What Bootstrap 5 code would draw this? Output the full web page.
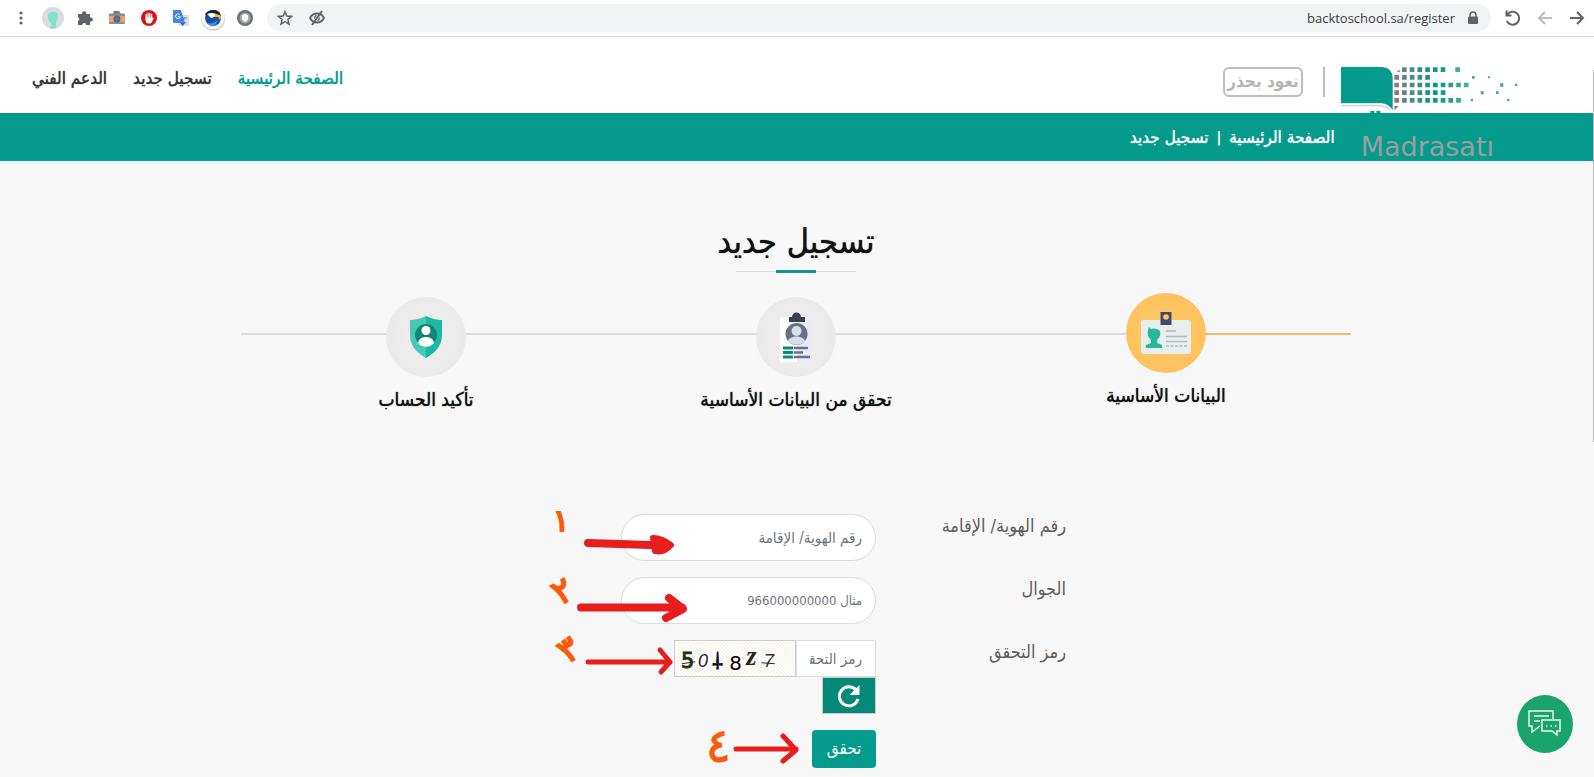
<!DOCTYPE html>
<html lang="ar" dir="rtl">
<head>
<meta charset="utf-8">
<meta name="viewport" content="width=device-width, initial-scale=1">
<title>تسجيل جديد</title>
<link href="https://cdn.jsdelivr.net/npm/bootstrap@5.3.0/dist/css/bootstrap.min.css" rel="stylesheet">
<style>
:root { --teal: #049b8c; --ink: #111; --grey: #dcdcdc; }
body { font-family: "DejaVu Sans Condensed", "DejaVu Sans", sans-serif; background: #f7f7f7; color: var(--ink); min-height: 100vh; }
.browser-bar { height: 37px; border-bottom: 1px solid #d5d7da; background: #fff; padding-left: 5px; padding-right: 1px; color: #5f6368; }
.tool { width: 32px; height: 32px; padding: 0; border: 0; background: none; color: inherit; display: flex; align-items: center; justify-content: center; flex: none; }
.omnibox { height: 28px; background: #f1f3f4; border-radius: 14px; margin: 0 6px; padding-right: 2px; padding-left: 2px; }
.omnibox input { font: 13px/20px "Open Sans", sans-serif; color: #3c4043; background: none; border: 0; text-align: right; outline: 0; min-width: 0; padding: 0 2px; }
.site-head { height: 76px; background: #fff; padding: 0 72px 0 32px; }
.brand { margin-top: 30px; }
.campaign { width: 80px; height: 30px; border: 2px solid #bdbdbd; border-radius: 6px; color: #b5b5b5; font-size: 17px; line-height: 24px; font-weight: 700; text-align: center; white-space: nowrap; }
.rule { width: 2px; height: 30px; background: #bdbdbd; margin: 0 16px 0 20px; }
.menu { gap: 26px; margin-top: 29px; font-size: 17px; line-height: 24px; text-shadow: 0 0 1px currentColor; }
.menu a { color: #333; text-decoration: none; }
.menu a.active { color: var(--teal); }
.crumbs { height: 48px; background: var(--teal); color: #fff; padding-right: 100px; font-size: 17px; line-height: 24px; text-shadow: 0 0 1px currentColor; }
.crumbs a { color: #fff; text-decoration: none; }
.wordmark { font: 27px/30px "DejaVu Sans", sans-serif; color: #9a9f9e; margin: 19px 0 0 26px; text-shadow: none; }
.page-body { padding-right: 2px; }
.container-page { max-width: 1140px; --bs-gutter-x: 30px; }
.row-page { --bs-gutter-x: 30px; }
.title { font-size: 34px; line-height: 48px; font-weight: 500; margin: 0 0 5px; text-shadow: 0 0 1px currentColor; }
.title-rule { width: 120px; height: 3px; background: linear-gradient(90deg, transparent 40px, #159788 40px 80px, transparent 80px), linear-gradient(var(--grey), var(--grey)) center / 100% 1px no-repeat; margin-bottom: 20px; }
.steps { margin-bottom: 101px; }
.step { flex: 1 1 0; position: relative; padding-top: 4px; font-size: 19px; line-height: 28px; text-shadow: 0 0 1px currentColor; }
.step::before { content: ""; position: absolute; top: 40px; left: 0; right: 0; height: 2px; background: var(--grey); }
.step.current { padding-top: 0; }
.step.current::before { background: linear-gradient(90deg, var(--grey) 50%, #eebc60 50%); }
.disc { position: relative; width: 80px; height: 80px; border-radius: 50%; background: radial-gradient(#f0f0f0, #e8e8e8); margin-bottom: 8px; }
.current .disc { background: radial-gradient(#ffc96c, #fdbf58); }
.field { margin-bottom: 16px; position: relative; }
.field label { font-size: 18px; line-height: 24px; color: #5d5d5d; }
.field .form-control { font-size: 15px; color: #555; border-color: #dcdcdc; padding: 0 13px; }
.field .form-control::placeholder { color: #6c757d; }
.field #mobile { font-size: 13px; }
.pill { height: 47px; border-radius: 24px; }
.captcha .form-control { width: 80px; height: 37px; border-radius: 0; flex: none; }
.captcha svg { border: 1px solid #ccc; flex: none; }
.reload { width: 54px; height: 37px; background: #048877; border: 1px solid #ccc; border-radius: 0; padding: 0; }
.after-label { margin-inline-start: 33.3333%; }
.submit { width: 64px; height: 38px; background: var(--teal); color: #fff; border: 0; border-radius: 4px; font-size: 17px; padding: 0; }
.mark-up { position: absolute; left: 0; top: 0; overflow: visible; pointer-events: none; direction: ltr; font-family: "DejaVu Sans", sans-serif; }
.chat { width: 56px; height: 58px; border-radius: 50%; border: 0; padding: 0; background: #1aa36f; right: 21px; bottom: 24px; }
.thumb { width: 1px; height: 372px; top: 70px; right: 0; background: #bbb; }
</style>
</head>
<body>
<div class="browser-bar d-flex align-items-center">
  <button class="tool" aria-label="التالي"><svg width="18" height="18" viewBox="0 0 18 18" fill="none" stroke="currentColor" stroke-width="2"><path d="M2 9h13M9 3l6 6-6 6"/></svg></button>
  <button class="tool" aria-label="السابق"><svg width="18" height="18" viewBox="0 0 18 18" fill="none" stroke="#bbbdbf" stroke-width="2"><path d="M16 9H3M9 3L3 9l6 6"/></svg></button>
  <button class="tool" aria-label="تحديث"><svg width="18" height="18" viewBox="0 0 18 18" fill="none" stroke="currentColor" stroke-width="2"><path d="M3 6a6.500 6.500 0 1 1-.2 6M2.500 1.500v5h5"/></svg></button>
  <div class="omnibox d-flex align-items-center flex-grow-1" dir="ltr">
    <button class="tool" aria-label="المتعقبات"><svg width="18" height="18" viewBox="0 0 18 18" fill="none" stroke="currentColor" stroke-width="1.800"><path d="M2 9c3-6 11-6 14 0-3 6-11 6-14 0z"/><path d="M4 16L14 2" stroke-width="2"/><path d="M6 9c0-2 1-3 3-3L6.500 10zM12 9c0 2-1 3-3 3l2.500-4z" fill="currentColor" stroke="none"/></svg></button>
    <button class="tool order-first" aria-label="مفضلة"><svg width="16" height="16" viewBox="0 0 16 16" fill="none" stroke="currentColor" stroke-width="1.500"><path d="M8 1.800l1.800 4.300 4.700.4-3.600 3 1.100 4.600L8 11.700 4 14.100l1.100-4.600-3.600-3 4.700-.4z"/></svg></button>
    <input class="flex-grow-1" type="text" value="backtoschool.sa/register" aria-label="العنوان">
    <span class="tool"><svg width="12" height="14" viewBox="0 0 12 14"><path d="M3 6V4a3 3 0 0 1 6 0v2" fill="none" stroke="#5f6368" stroke-width="1.500"/><rect x="1" y="5.500" width="10" height="7.500" rx="1" fill="#5f6368"/></svg></span>
  </div>
  <button class="tool" aria-label="إضافة"><svg width="16" height="16" viewBox="0 0 16 16"><circle cx="8" cy="8" r="8" fill="#6b7079"/><circle cx="8" cy="8" r="5.500" fill="#a4a7ae"/><path d="M5 5l3-1 3 1v3c0 2-1 3-3 4-2-1-3-2-3-4z" fill="#fff"/></svg></button>
  <button class="tool" aria-label="إضافة"><svg width="26" height="26" viewBox="0 0 26 26"><circle cx="13" cy="13.500" r="12" fill="#c9c9c9"/><circle cx="13" cy="12.500" r="11.500" fill="#fff"/><circle cx="13" cy="13" r="8" fill="#174ea6"/><path d="M5 9C9 4 17 4 20 8l1 4-6-1-9-1z" fill="#17202c"/><path d="M7 9c4-2 8-1 11 1l-4 2-3 1z" fill="#fff"/><path d="M15 9l5 1q2 2 0 5l-2-3-4 0z" fill="#f5b82e"/><path d="M7 18c4 1 8 0 11-3-2 6-7 8-11 3z" fill="#3d94ec"/></svg></button>
  <button class="tool" aria-label="إضافة"><svg width="16" height="16" viewBox="0 0 16 16"><rect x="6" y="5" width="10" height="11" fill="#dcdfe2"/><path d="M8 8h6M11 7v1c0 3-1 4-3 5M9 9c1 2 2 3 4 4" stroke="#6b8095" stroke-width="1" fill="none"/><path d="M0 0h8l4 13H1a1 1 0 0 1-1-1z" fill="#4785ec"/><path d="M7.500 13H12l-2.500 3z" fill="#2a56c6"/><path d="M6.500 4.500a2.300 2.300 0 1 0 .7 2H5" stroke="#fff" fill="none"/></svg></button>
  <button class="tool" aria-label="إضافة"><svg width="16" height="16" viewBox="0 0 16 16"><circle cx="8" cy="8" r="8" fill="#d91218"/><path d="M5.200 9V4.500M7 8V3.300M8.800 8V3.300M10.600 9V4.500" stroke="#fff" stroke-width="1.300" stroke-linecap="round"/><path d="M4.500 7.500h6.700L12 8c.5-1 1-.5.800 0L11 12c-1 2-5 2-6 0-.5-1-.5-3-.5-4.500z" fill="#fff"/></svg></button>
  <button class="tool" aria-label="إضافة"><svg width="16" height="14" viewBox="0 0 16 14"><path d="M5 0h5l2 3H4z" fill="#777b80"/><rect y="2.500" width="16" height="10.500" rx="1" fill="#8b8d90"/><rect y="5" width="16" height="6" fill="#ed9f67"/><circle cx="8" cy="8" r="3.500" fill="#5d6674"/><circle cx="8" cy="8" r="1.800" fill="#4a83c9"/></svg></button>
  <button class="tool" aria-label="الإضافات"><svg width="16" height="16" viewBox="0 0 16 16"><path d="M1 4h4a2.200 2.200 0 1 1 4.200 0H13v3.500a2.200 2.200 0 1 1 0 4.200V15H9.200a2 2 0 0 0-4 0H1v-4a2 2 0 0 0 0-3.800z" fill="#5f6368"/></svg></button>
  <button class="tool" aria-label="الحساب"><svg width="22" height="22" viewBox="0 0 22 22"><circle cx="11" cy="11" r="11" fill="#dadce0"/><path d="M6 7c2-3 9-3 10 0 .5 4-1 6-2 8l.5 5.500-5 1.400-2-2 2-1-.500-3C6 14 5.500 10 6 7z" fill="#7ee3d0"/></svg></button>
  <button class="tool" aria-label="القائمة"><svg width="4" height="14" viewBox="0 0 4 14" fill="#5f6368"><circle cx="2" cy="2" r="1.600"/><circle cx="2" cy="7" r="1.600"/><circle cx="2" cy="12" r="1.600"/></svg></button>
</div>

<header class="site-head d-flex align-items-start justify-content-between">
  <a href="#" class="brand d-flex text-decoration-none" aria-label="مدرستي">
    <svg width="181" height="46" viewBox="0 0 543 138">
      <defs><linearGradient id="fade" gradientUnits="userSpaceOnUse" x1="160" y1="0" x2="390" y2="0"><stop offset="0" stop-color="#827f80"/><stop offset=".5" stop-color="#0c9788"/><stop offset=".7" stop-color="#179d8d"/><stop offset="1" stop-color="#55b5a4"/></linearGradient></defs>
      <path d="M0 0h124q31 2 31 34v96q-14-21-34-21H0z" fill="#049b8c"/>
      <path d="M0 113h118q20 0 34 16" fill="none" stroke="#fff" stroke-width="5"/>
      <path d="M3 116h116q18 1 30 14" fill="none" stroke="#9aa" stroke-width="2"/>
      <path d="M88 132h12v6H88zM106 132h12v6h-12z" fill="#049b8c"/>
      <path d="M168 15l8-8v8zM160 117h13l-12 13z" fill="#827f80"/>
      <g stroke="url(#fade)" stroke-width="14" fill="none" stroke-dasharray="14 9.200">
        <path d="M183 8.010L313 8"/><path d="M160 31.010L267 31"/><path d="M160 54.010L384 54"/><path d="M160 77.010L314 77"/><path d="M160 100.010L362 100"/>
      </g>
      <path d="M343 1h14v14h-14zM393 27h8v8h-8zM441 28h6v6h-6zM477 49h10v10h-10zM522 50h7v7h-7zM419 73h9v9h-9zM465 73h8v8h-8zM389 96h7v7h-7zM498 96h7v7h-7z" fill="#3fae9d"/>
    </svg>
    <span class="rule"></span>
    <span class="campaign">نعود بحذر</span>
  </a>
  <nav class="menu d-flex"><a class="active" href="#">الصفحة الرئيسية</a><a href="#">تسجيل جديد</a><a href="#">الدعم الفني</a></nav>
</header>

<div class="crumbs d-flex align-items-start">
  <span class="wordmark">Madrasatı</span>
  <nav class="d-flex gap-2 pt-2 mt-1"><a href="#">الصفحة الرئيسية</a><small>|</small><span>تسجيل جديد</span></nav>
</div>

<div class="page-body">
<main class="container container-page pt-5 mt-2">
  <div class="d-flex flex-column align-items-center">
    <h1 class="title">تسجيل جديد</h1>
    <div class="title-rule"></div>
  </div>
  <ol class="steps d-flex list-unstyled text-center pe-0">
    <li class="step current d-flex flex-column align-items-center">
      <span class="disc d-flex align-items-center justify-content-center"><svg width="50" height="42" viewBox="0 0 50 42"><rect y="8" width="50" height="34" rx="3" fill="#e8edee"/><path d="M19.500 0h11v13h-11z" fill="#434a66"/><circle cx="25" cy="5" r="2.800" fill="#ffc66a"/><path d="M8 15l2 2c3-1 7 0 9 2 1 5-1 7-3 9v3l5 2v3H5v-3l5-2v-3c-4-4-4-7-2-13z" fill="#25b899"/><path d="M25 19h10M25 24.500h21M25 29.500h21" stroke="#b0bbbc" stroke-width="1.700"/><path d="M25 34h21" stroke="#b0bbbc" stroke-width="1.700" stroke-dasharray="3 1.500"/></svg></span>
      <span>البيانات الأساسية</span>
    </li>
    <li class="step d-flex flex-column align-items-center">
      <span class="disc d-flex align-items-center justify-content-center"><svg width="33" height="50" viewBox="0 0 33 50"><path d="M0 6h17v44H0z" fill="#fff"/><path d="M17 6h15v44H17z" fill="#e9ebf5"/><path d="M9 5h3a4.500 4.500 0 0 1 9 0h4v5H9z" fill="#3b4047"/><circle cx="16.500" cy="22" r="11" fill="#6a7186"/><circle cx="16.500" cy="19" r="5" fill="#d9dde7"/><path d="M8 29c2-6 15-6 17 0-4 5-13 5-17 0z" fill="#d9dde7"/><path d="M3 36h10M3 40.500h10M3 45h10" stroke="#0d8a75" stroke-width="3"/><path d="M14 36h14M14 40.500h9M14 45h16" stroke="#6a7186" stroke-width="2.500"/></svg></span>
      <span>تحقق من البيانات الأساسية</span>
    </li>
    <li class="step d-flex flex-column align-items-center">
      <span class="disc d-flex align-items-center justify-content-center"><svg width="32" height="42" viewBox="0 0 32 42"><path d="M16 0Q8 4 0 4v15c0 11 7 18 16 23z" fill="#47c9b7"/><path d="M16 0q8 4 16 4v15c0 11-7 18-16 23z" fill="#19b9a4"/><circle cx="16" cy="19" r="11" fill="#0c8877"/><circle cx="16" cy="14.500" r="4.500" fill="#fff"/><path d="M8 27c1-8 15-8 16 0-4 5-12 5-16 0z" fill="#fff"/></svg></span>
      <span>تأكيد الحساب</span>
    </li>
  </ol>

  <div class="row row-page justify-content-center">
    <form class="col-lg-6">
      <div class="field">
        <div class="row row-page">
          <label class="col-4" for="idno">رقم الهوية/ الإقامة</label>
          <div class="col-6"><input id="idno" class="form-control pill" type="text" placeholder="رقم الهوية/ الإقامة"></div>
        </div>
        <svg class="mark-up" width="170" height="47" viewBox="526 514 170 47">
          <text x="553" y="531" font-size="30" fill="#fb5a0a" stroke="#fb5a0a" stroke-width="2">١</text>
          <path d="M588 543l62 2" stroke="#e81e1e" stroke-width="8" stroke-linecap="round"/><path d="M653 538q9 0 18 7-7 8-16 6z" fill="#e81e1e" stroke="#e81e1e" stroke-width="6" stroke-linejoin="round"/>
        </svg>
      </div>
      <div class="field">
        <div class="row row-page">
          <label class="col-4" for="mobile">الجوال</label>
          <div class="col-6"><input id="mobile" class="form-control pill" type="text" placeholder="مثال 966000000000"></div>
        </div>
        <svg class="mark-up" width="180" height="47" viewBox="526 577 180 47">
          <text x="553" y="602" font-size="34" fill="#fb5a0a" stroke="#fb5a0a" stroke-width="2" transform="rotate(-30 563 590)">٢</text>
          <path d="M581 607.500h101M669 598l14 11-17 9" fill="none" stroke="#e81e1e" stroke-width="8" stroke-linecap="round" stroke-linejoin="round"/>
        </svg>
      </div>
      <div class="field">
        <div class="row row-page">
          <label class="col-4" for="code">رمز التحقق</label>
          <div class="col-6">
            <div class="captcha d-flex">
              <input id="code" class="form-control" type="text" placeholder="رمز التحقق">
              <svg width="122" height="37" viewBox="0 0 122 37" direction="ltr">
                <defs><pattern id="hatch" width="4" height="4" patternUnits="userSpaceOnUse"><path d="M0 0l4 4" stroke="#f1e9d9"/></pattern></defs>
                <rect width="122" height="37" fill="#fff"/><rect width="122" height="37" fill="url(#hatch)"/>
                <text x="4" y="29" font-family="DejaVu Sans" font-size="22" fill="#16330c" stroke="#16330c">5</text>
                <text x="22" y="27" font-family="Liberation Sans" font-style="italic" font-size="19" fill="#223">0</text>
                <text x="38" y="-15" font-family="Liberation Serif" font-size="22" fill="#112" stroke="#112" transform="rotate(180 43 0)">†</text>
                <text x="55" y="31" font-family="DejaVu Sans" font-size="21" fill="#000">8</text>
                <text x="73" y="25" font-family="Liberation Serif" font-weight="700" font-style="italic" font-size="28" fill="#2a2419">z</text>
                <text x="91" y="28" font-family="Liberation Sans" font-style="italic" font-size="20" fill="#333">7</text>
                <path d="M5 24l14-2M89 23l14 1" stroke="#222"/>
              </svg>
            </div>
            <button class="btn reload d-block" type="button" aria-label="تحديث الرمز"><svg width="24" height="24" viewBox="0 0 24 24"><path d="M21 15a9.500 9.500 0 1 1-2-9" fill="none" stroke="#fff" stroke-width="3"/><path d="M22.500 1v10h-10z" fill="#fff"/></svg></button>
          </div>
        </div>
        <svg class="mark-up" width="170" height="47" viewBox="526 641 170 47">
          <text x="559" y="661" font-size="34" fill="#fb5a0a" stroke="#fb5a0a" stroke-width="2" transform="rotate(-35 570 649)">٣</text>
          <path d="M588 663h82M660 651l10 12-9 10" fill="none" stroke="#e81e1e" stroke-width="5" stroke-linecap="round" stroke-linejoin="round"/>
        </svg>
      </div>
      <div class="field mb-0">
        <div class="row row-page">
          <div class="col-6 after-label"><button class="btn submit" type="submit">تحقق</button></div>
        </div>
        <svg class="mark-up" width="300" height="38" viewBox="526 731 300 38">
          <text x="706" y="763" font-size="46" fill="#fb5a0a" stroke="#fb5a0a">٤</text>
          <path d="M736 750h60M783 737l13 14-13 11" fill="none" stroke="#e81e1e" stroke-width="5" stroke-linecap="round" stroke-linejoin="round"/>
        </svg>
      </div>
    </form>
  </div>
</main>
</div>
<button class="chat position-fixed d-flex align-items-center justify-content-center" aria-label="محادثة"><svg width="34" height="28" viewBox="0 0 34 28" fill="none" stroke="#e9f7f0" stroke-width="1.500"><path d="M12 16l-8 6v-6H1V1h24v8M6 6h15M6 11h6"/><path d="M14 10h18v11h-3v4l-5-4H14z"/><path d="M18 16h1.500M22.500 16H24M27 16h1.500"/></svg></button>
<span class="thumb position-absolute"></span>
<script src="https://cdn.jsdelivr.net/npm/bootstrap@5.3.0/dist/js/bootstrap.bundle.min.js"></script>
</body>
</html>
